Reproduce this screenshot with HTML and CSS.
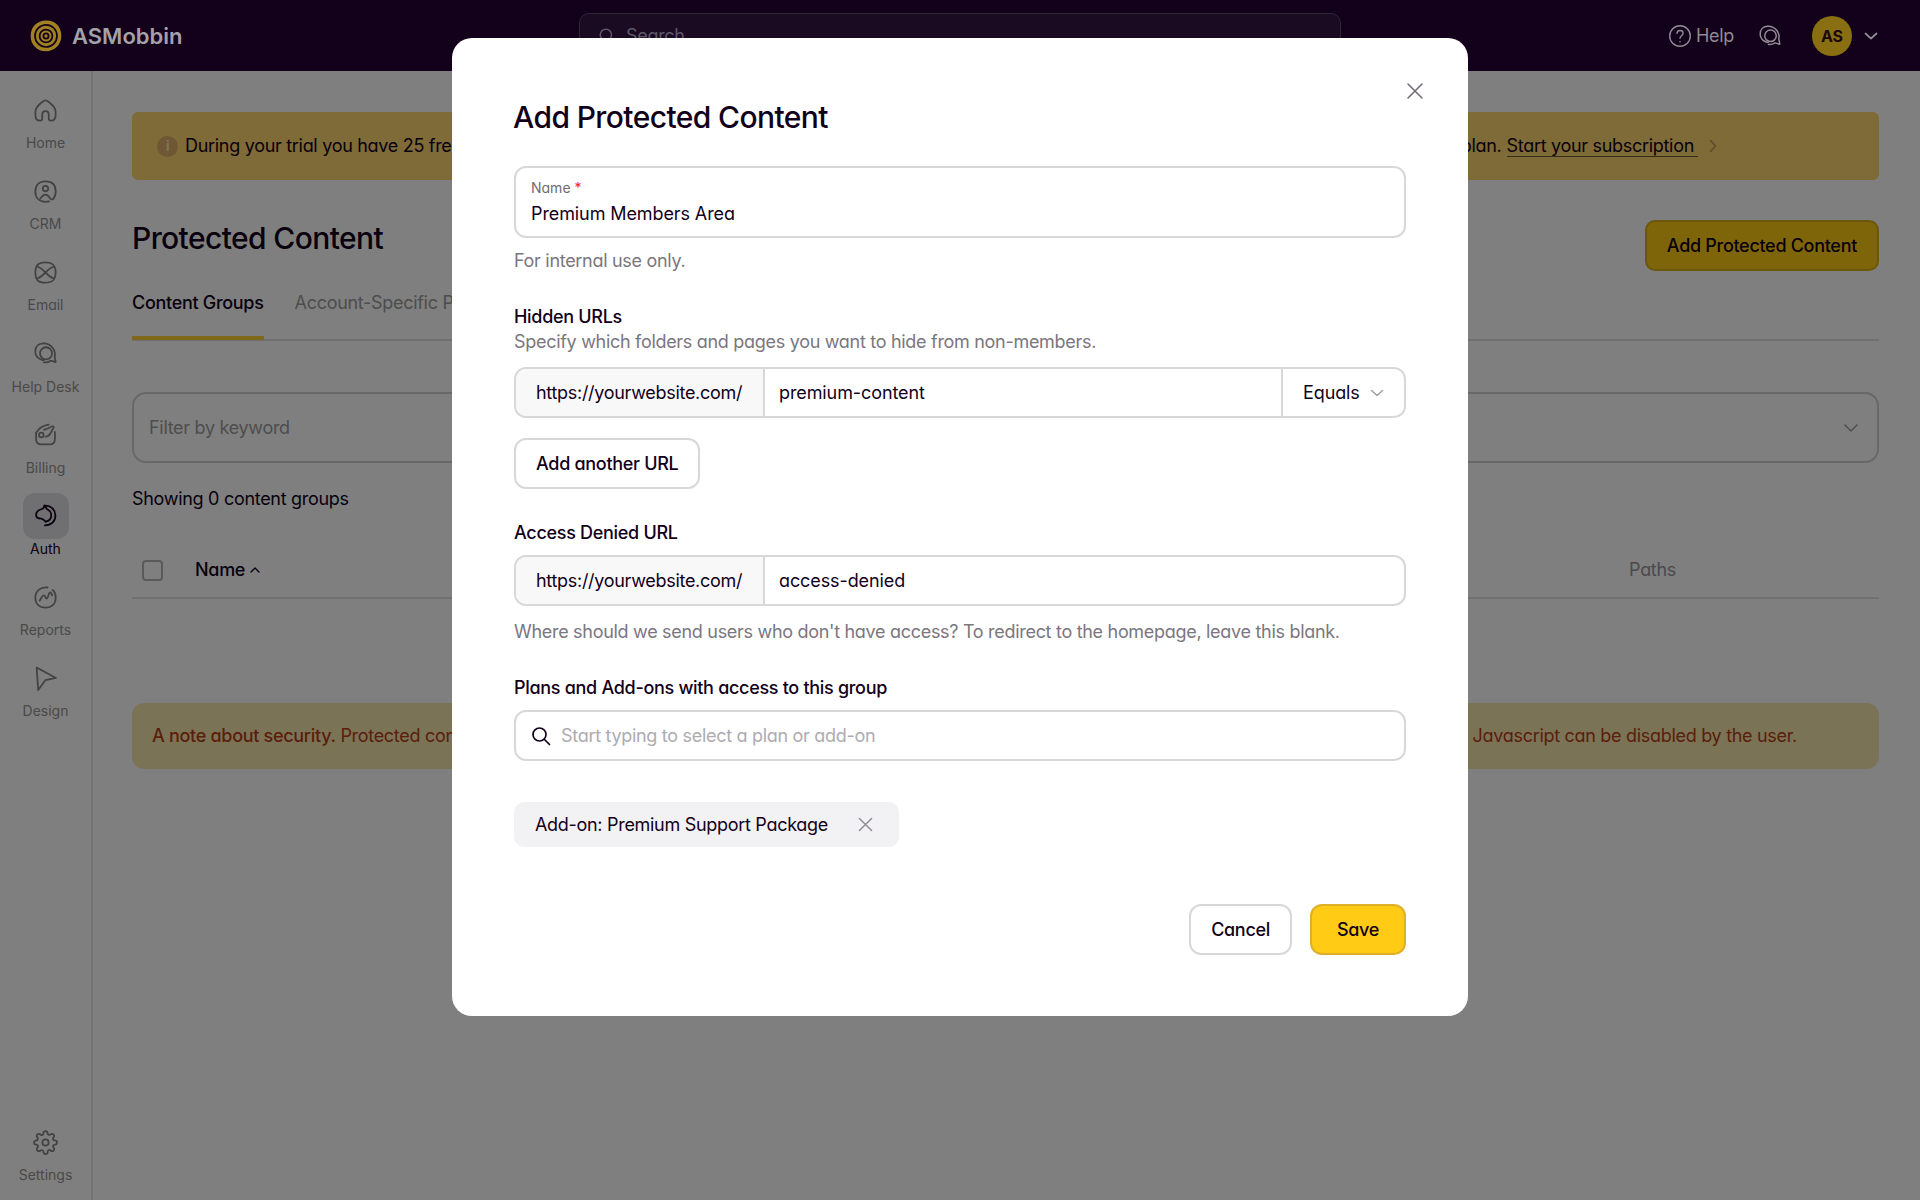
FILE: index.html
```html
<!DOCTYPE html>
<html lang="en">
<head>
    <meta charset="UTF-8">
    <meta name="viewport" content="width=device-width, initial-scale=1.0">
    <title>Protected Content</title>
    <link rel="stylesheet" href="styles.css">
</head>
<body>
<header class="topbar">
    <div class="brand">
        <svg class="brand-logo" viewBox="0 0 32 32" fill="none">
            <path fill="#a28122" d="M16 .5c4.600-.2 8 1.200 11 4 2.800 2.800 4.300 6.500 4.300 11.300 0 4.400-1.400 8-4.400 11-3 2.900-6.700 4.500-11 4.500-4.500 0-8.100-1.500-11-4.500C2 24 .7 20.300.7 16c0-4.600 1.400-8.200 4.300-11.200C8 1.900 11.500.7 16 .5z"/>
            <path stroke="#13001a" stroke-width="1.700" d="M16 4.800c3.200 0 5.700 1.100 7.800 3.200 2.100 2.100 3.200 4.800 3.200 8 0 3.100-1.100 5.700-3.300 7.800-2.100 2.100-4.600 3.200-7.700 3.200-3 0-5.700-1.100-7.800-3.300C6 21.600 5 19.100 5 16c0-3.100 1.100-5.700 3.200-7.800C10.300 6 12.900 4.800 16 4.800z"/>
            <circle stroke="#13001a" stroke-width="1.800" cx="16" cy="16" r="6.400"/>
            <circle stroke="#13001a" stroke-width="1.800" cx="16" cy="16" r="2.600"/>
        </svg>
        <span class="brand-name">ASMobbin</span>
    </div>
    <div class="topsearch">
        <svg class="icon-18" viewBox="0 0 24 24" fill="none" stroke="#5f5866" stroke-width="2" stroke-linecap="round"><circle cx="10.500" cy="10.500" r="7.500"/><path d="M16 16l6 6"/></svg>
        <span>Search</span>
    </div>
    <div class="topright">
        <a class="help-link">
            <svg class="icon-24" viewBox="0 0 24 24" fill="none" stroke="#8f8a94" stroke-width="1.400" stroke-linecap="round"><circle cx="12" cy="12" r="10.300"/><path d="M9 9.300c.2-1.700 1.400-2.800 3.100-2.800 1.700 0 3 1.100 3 2.700 0 2.500-3.100 2.600-3.100 5.100"/><path d="M12 17.500v.2"/></svg>
            <span>Help</span>
        </a>
        <svg class="icon-24 top-chat" viewBox="0 0 24 24" fill="none" stroke="#8f8a94" stroke-width="1.500" stroke-linecap="round" stroke-linejoin="round"><path d="M10 2.200c4.500 0 7 1.800 9 4.500 1.800 2.500 2.500 5.500 1.800 8.500l1 5-4.800-1.300c-2 1.300-4 2-6.500 1.600"/><path d="M10 2.200C5 2.200 2.200 5.500 2.200 10c0 3 1.500 5.500 4 7 1 .6 2 1.200 4 1.500"/><circle cx="12.500" cy="11.800" r="5.800"/></svg>
        <div class="avatar">AS</div>
        <svg class="top-caret" viewBox="0 0 14 8" fill="none" stroke="#8f8a94" stroke-width="1.800" stroke-linecap="round" stroke-linejoin="round"><path d="M1.500 1.500L7 6.500l5.500-5"/></svg>
    </div>
</header>

<div class="layout">
    <nav class="sidebar">
        <a class="nav-item">
            <span class="nav-icon"><svg viewBox="0 0 24 24"><path d="M12 2.200c-1.200 0-2.200.9-3.300 1.800C5.800 6.500 2.300 8.600 2.300 13.200v3.300c0 3.100 1.800 5.300 4.600 5.300 1.500 0 2-.9 2-2.300v-3.700c0-1.900 1.300-3.100 3.100-3.100s3.100 1.200 3.100 3.100v3.700c0 1.400.5 2.300 2 2.300 2.800 0 4.600-2.200 4.600-5.300v-3.300c0-4.600-3.500-6.700-6.400-9.200C14.200 3.100 13.200 2.200 12 2.200z"/></svg></span>
            <span>Home</span>
        </a>
        <a class="nav-item">
            <span class="nav-icon"><svg viewBox="0 0 24 24"><path d="M15.500 21.500c-1.100.3-2.300.4-3.500.4C5.800 21.900 2.200 18 2.200 12S5.800 2.200 12 2.200 21.800 5.800 21.800 12c0 3-.8 5.500-2.500 7.200-1.200 1-2.300.2-3.200-1-1-1.600-2.300-3.200-4.100-3.200-2 0-3.500 1.700-5 3.800"/><circle cx="12" cy="9.200" r="2.600"/></svg></span>
            <span>CRM</span>
        </a>
        <a class="nav-item">
            <span class="nav-icon"><svg viewBox="0 0 24 24"><path d="M12 2.300c7 0 9.700 2.700 9.700 9.700s-2.700 9.700-9.700 9.700S2.300 19 2.300 12 5 2.300 12 2.300z"/><path d="M4.500 6.500c3 1 5 3 7.500 5.500 2.500-2.500 4.500-4.500 7.500-5.500"/><path d="M4.500 17.500c3-1 5-3 7.500-5.500 2.500 2.500 4.500 4.500 7.500 5.500"/></svg></span>
            <span>Email</span>
        </a>
        <a class="nav-item">
            <span class="nav-icon"><svg viewBox="0 0 24 24"><path d="M10 2.200c4.500 0 7 1.800 9 4.500 1.800 2.500 2.500 5.500 1.800 8.500l1 5-4.800-1.300c-2 1.300-4 2-6.500 1.600"/><path d="M10 2.200C5 2.200 2.200 5.500 2.200 10c0 3 1.500 5.500 4 7 1 .6 2 1.200 4 1.500"/><circle cx="12.500" cy="11.800" r="5.800"/></svg></span>
            <span>Help Desk</span>
        </a>
        <a class="nav-item">
            <span class="nav-icon"><svg viewBox="0 0 24 24"><path d="M3 10.500v6c0 3.300 2 5 5 5h8c3 0 5-1.700 5-5V9.500"/><path d="M3 10.500C5 6.500 9 3.500 15 2.500"/><circle cx="8" cy="12.500" r="2.200"/><path d="M12 14c2.500 0 3.800-1.200 4.800-3.200l3-5.300c.4-1-.8-2-1.800-1.300-2 1.500-4.500 2.500-7.500 3.300"/></svg></span>
            <span>Billing</span>
        </a>
        <a class="nav-item nav-active">
            <span class="nav-icon"><svg viewBox="0 0 24 24"><path d="M11 2.500c6-.5 10.500 3.800 10.500 9.500s-4 9.500-10 9.500"/><path d="M11 2.500c0 2-1 3-3 3.500-3 .8-5 3-5 5.500 0 3 3 3.500 5 3.500 2 .5 3 1.500 4 2.800"/><path d="M11 2.500l2.500 3.500c2.500 1 4 3.300 4 6 0 3-2 5.300-5.500 5.800"/></svg></span>
            <span>Auth</span>
        </a>
        <a class="nav-item">
            <span class="nav-icon"><svg viewBox="0 0 24 24"><path d="M14 2.400C7 1.500 2.200 6 2.200 12S6 21.800 12 21.800 21.800 18 21.800 12c0-3-1-5.500-3-7.200"/><path d="M6.500 15c1.500-3 3-5 4-5 1.500 0 1.500 3 2.500 3 1.500 0 2-6 3.500-6 1 0 1.500 1.500 2 3"/></svg></span>
            <span>Reports</span>
        </a>
        <a class="nav-item">
            <span class="nav-icon"><svg viewBox="0 0 24 24"><path d="M3.500 1.500L22 11.500l-10 2L5 23z"/></svg></span>
            <span>Design</span>
        </a>
        <a class="nav-item nav-bottom">
            <span class="nav-icon"><svg viewBox="0 0 24 24"><circle cx="12" cy="12" r="3"/><path d="M19.400 15a1.650 1.650 0 0 0 .33 1.820l.06.06a2 2 0 0 1 0 2.830 2 2 0 0 1-2.830 0l-.06-.06a1.650 1.650 0 0 0-1.820-.33 1.650 1.650 0 0 0-1 1.510V21a2 2 0 0 1-2 2 2 2 0 0 1-2-2v-.09A1.650 1.650 0 0 0 9 19.400a1.650 1.650 0 0 0-1.820.33l-.06.06a2 2 0 0 1-2.830 0 2 2 0 0 1 0-2.830l.06-.06a1.650 1.650 0 0 0 .33-1.820 1.650 1.650 0 0 0-1.510-1H3a2 2 0 0 1-2-2 2 2 0 0 1 2-2h.09A1.650 1.650 0 0 0 4.600 9a1.650 1.650 0 0 0-.33-1.820l-.06-.06a2 2 0 0 1 0-2.830 2 2 0 0 1 2.830 0l.06.06a1.650 1.650 0 0 0 1.820.33H9a1.650 1.650 0 0 0 1-1.510V3a2 2 0 0 1 2-2 2 2 0 0 1 2 2v.09a1.650 1.650 0 0 0 1 1.510 1.650 1.650 0 0 0 1.820-.33l.06-.06a2 2 0 0 1 2.830 0 2 2 0 0 1 0 2.830l-.06.06a1.650 1.650 0 0 0-.33 1.820V9a1.650 1.650 0 0 0 1.510 1H21a2 2 0 0 1 2 2 2 2 0 0 1-2 2h-.09a1.650 1.650 0 0 0-1.510 1z"/></svg></span>
            <span>Settings</span>
        </a>
    </nav>

    <main class="content">
        <div class="trial-banner">
            <span class="info-dot">i</span>
            <span>During your trial you have 25 free contacts</span>
            <span class="trial-right">
                <span>to use on any plan.</span>
                <a class="trial-link">Start your subscription</a>
                <svg class="trial-chevron" viewBox="0 0 8 14" fill="none" stroke="#b8985a" stroke-width="1.600" stroke-linecap="round" stroke-linejoin="round"><path d="M1.500 1.500L6.500 7l-5 5.500"/></svg>
            </span>
        </div>

        <div class="page-head">
            <h1>Protected Content</h1>
            <button class="btn-add">Add Protected Content</button>
        </div>

        <div class="tabs">
            <a class="tab tab-active">Content Groups</a>
            <a class="tab">Account-Specific Pages</a>
        </div>

        <div class="filter">
            <span>Filter by keyword</span>
            <svg class="filter-caret" viewBox="0 0 14 8" fill="none" stroke="#a0a0a0" stroke-width="1.600" stroke-linecap="round" stroke-linejoin="round"><path d="M1 1l6 6 6-6"/></svg>
        </div>

        <p class="count">Showing 0 content groups</p>

        <div class="table-head">
            <span class="check"></span>
            <span class="th-name">Name</span>
            <svg class="th-sort" viewBox="0 0 10 6" fill="none" stroke="#12001a" stroke-width="1.400" stroke-linecap="round" stroke-linejoin="round"><path d="M1 5l4-4 4 4"/></svg>
            <span class="th-paths">Paths</span>
        </div>

        <div class="note">
            <span><b>A note about security.</b> Protected content</span>
            <span class="note-right">Javascript can be disabled by the user.</span>
        </div>
    </main>
</div>

<div class="backdrop"></div>

<div class="modal-wrap">
    <form class="modal">
        <button type="button" class="modal-close">
            <svg viewBox="0 0 16 16" fill="none" stroke="#6f6a74" stroke-width="1.500" stroke-linecap="round"><path d="M1 1l14 14M15 1L1 15"/></svg>
        </button>
        <h2>Add Protected Content</h2>

        <div class="name-field">
            <div class="name-label">Name <span class="req">*</span></div>
            <div class="name-value">Premium Members Area</div>
        </div>
        <p class="hint hint-name">For internal use only.</p>

        <div class="label label-first">Hidden URLs</div>
        <p class="hint hint-under">Specify which folders and pages you want to hide from non-members.</p>
        <div class="url-row">
            <span class="url-prefix">https://yourwebsite.com/</span>
            <span class="url-path">premium-content</span>
            <span class="url-match">
                Equals
                <svg viewBox="0 0 14 8" fill="none" stroke="#a5a1a9" stroke-width="1.600" stroke-linecap="round" stroke-linejoin="round"><path d="M1.500 1.500L7 6.500l5.500-5"/></svg>
            </span>
        </div>
        <button type="button" class="btn btn-another">Add another URL</button>

        <div class="label label-access">Access Denied URL</div>
        <div class="url-row">
            <span class="url-prefix">https://yourwebsite.com/</span>
            <span class="url-path">access-denied</span>
        </div>
        <p class="hint hint-access">Where should we send users who don't have access? To redirect to the homepage, leave this blank.</p>

        <div class="label label-plans">Plans and Add-ons with access to this group</div>
        <div class="plan-search">
            <svg viewBox="0 0 20 20" fill="none" stroke="#12001a" stroke-width="1.700" stroke-linecap="round"><circle cx="8.500" cy="8.500" r="6.500"/><path d="M13.500 13.500l5 5"/></svg>
            <span>Start typing to select a plan or add-on</span>
        </div>

        <div class="chip">
            <span>Add-on: Premium Support Package</span>
            <svg viewBox="0 0 16 16" fill="none" stroke="#8e8a92" stroke-width="1.500" stroke-linecap="round"><path d="M1.500 1.500l13 13M14.500 1.500l-13 13"/></svg>
        </div>

        <div class="modal-actions">
            <button type="button" class="btn">Cancel</button>
            <button type="button" class="btn btn-save">Save</button>
        </div>
    </form>
</div>
</body>
</html>
```

FILE: styles.css
```css
* {
    box-sizing: border-box;
}

html, body {
    height: 100%;
}

body {
    margin: 0;
    overflow: hidden;
    font-family: Inter, "Noto Sans", Arial, sans-serif;
    font-feature-settings: "cv11";
    font-size: 18px;
    line-height: 24px;
    letter-spacing: -0.3px;
    color: #12001a;
    background-color: #fff;
}

button {
    font: inherit;
    font-feature-settings: inherit;
    letter-spacing: inherit;
}

p, h1, h2 {
    margin: 0;
}

/* top bar sits over the backdrop, colours are already dimmed */
.topbar {
    position: relative;
    z-index: 20;
    display: flex;
    align-items: center;
    height: 71px;
    padding: 0 42px 0 30px;
    background-color: #13001a;
}

.brand {
    display: flex;
    align-items: center;
    gap: 10px;
    width: 549px;
}

.brand-logo {
    width: 32px;
    height: 32px;
}

.brand-name {
    font-size: 22px;
    font-weight: 600;
    letter-spacing: 0;
    color: #a5a1a8;
}

.topsearch {
    display: flex;
    align-items: center;
    gap: 10px;
    width: 762px;
    height: 46px;
    padding: 0 18px;
    color: #5f5866;
    background-color: #1a0a22;
    border: 1px solid #2f2636;
    border-radius: 10px;
}

.icon-18 {
    width: 18px;
    height: 18px;
}

.icon-24 {
    width: 24px;
    height: 24px;
}

.topright {
    display: flex;
    align-items: center;
    margin-left: auto;
}

.help-link {
    display: flex;
    align-items: center;
    gap: 4px;
    color: #8f8a94;
}

.top-chat {
    margin-left: 24px;
}

.avatar {
    display: flex;
    align-items: center;
    justify-content: center;
    width: 40px;
    height: 40px;
    margin-left: 30px;
    font-size: 16px;
    font-weight: 700;
    letter-spacing: 0;
    color: #1a0a10;
    background-color: #8a6f12;
    border-radius: 50%;
}

.top-caret {
    width: 14px;
    height: 8px;
    margin-left: 12px;
}

.layout {
    display: flex;
    height: calc(100% - 71px);
}

.sidebar {
    display: flex;
    flex-direction: column;
    flex: 0 0 93px;
    padding-top: 16px;
    background-color: #fff;
    border-right: 2px solid #e6e6e6;
}

.nav-item {
    display: flex;
    flex-direction: column;
    align-items: center;
    height: 81.200px;
    font-size: 14px;
    line-height: 20px;
    letter-spacing: 0;
    color: #939393;
}

.nav-icon {
    display: flex;
    align-items: center;
    justify-content: center;
    width: 46px;
    height: 46px;
    border-radius: 12px;
}

.nav-icon svg {
    width: 25px;
    height: 25px;
    fill: none;
    stroke: #848484;
    stroke-width: 1.700;
    stroke-linecap: round;
    stroke-linejoin: round;
}

.nav-active {
    color: #12001a;
}

.nav-active .nav-icon {
    background-color: #e0dee2;
}

.nav-active .nav-icon svg {
    stroke: #12001a;
}

.nav-bottom {
    margin-top: auto;
    height: 81px;
}

.content {
    flex: 1;
    min-width: 0;
    padding: 41px 41px 0 39px;
}

.trial-banner {
    display: flex;
    align-items: center;
    height: 68px;
    padding: 0 25px;
    background-color: #ffd66e;
    border-radius: 6px;
}

.info-dot {
    display: flex;
    align-items: center;
    justify-content: center;
    width: 21px;
    height: 21px;
    margin-right: 7px;
    font-size: 13px;
    font-weight: 700;
    color: #ffe8b0;
    background-color: #dcae68;
    border-radius: 50%;
}

.trial-right {
    display: flex;
    align-items: center;
    gap: 5px;
    margin-left: auto;
    margin-right: 137px;
}

.trial-link {
    padding-right: 4px;
    line-height: 21px;
    border-bottom: 1px solid #6b5a30;
}

.trial-chevron {
    width: 8px;
    height: 14px;
    margin-left: 6px;
}

.page-head {
    display: flex;
    align-items: center;
    justify-content: space-between;
    margin-top: 40px;
}

h1 {
    margin-top: -15px;
    font-size: 30px;
    line-height: 36px;
    font-weight: 500;
    letter-spacing: -0.6px;
}

.btn-add {
    height: 51px;
    padding: 0 20px;
    font-weight: 500;
    color: #12001a;
    background-color: #ffcb14;
    border: 2px solid #d9ad18;
    border-radius: 10px;
}

.tabs {
    display: flex;
    gap: 31px;
    height: 70px;
    padding-top: 20px;
    border-bottom: 2px solid #e0e0e0;
}

.tab {
    height: 49px;
    color: #9a9a9a;
}

.tab-active {
    font-weight: 500;
    color: #12001a;
    border-bottom: 4px solid #ffd02e;
}

.filter {
    display: flex;
    align-items: center;
    justify-content: space-between;
    height: 71px;
    margin-top: 51px;
    padding: 0 19px 0 15px;
    color: #9c9c9c;
    border: 2px solid #d0d0d0;
    border-radius: 14px;
}

.filter-caret {
    width: 14px;
    height: 8px;
}

.count {
    margin-top: 24px;
}

.table-head {
    display: flex;
    align-items: center;
    height: 60px;
    margin-top: 28px;
    padding: 4px 0 0 10px;
    border-bottom: 2px solid #e3e3e3;
}

.check {
    width: 21px;
    height: 21px;
    border: 2px solid #b5b5b5;
    border-radius: 4px;
}

.th-name {
    margin-left: 32px;
    font-weight: 500;
}

.th-sort {
    width: 10px;
    height: 6px;
    margin-left: 5px;
}

.th-paths {
    margin-left: auto;
    margin-right: 203px;
    color: #949494;
}

.note {
    display: flex;
    align-items: center;
    justify-content: space-between;
    height: 66px;
    margin-top: 104px;
    padding: 0 82px 0 20px;
    color: #b53d15;
    background-color: #f7e6ad;
    border-radius: 12px;
}

.note b {
    font-weight: 500;
}

.backdrop {
    position: fixed;
    inset: 0;
    z-index: 10;
    background-color: rgba(0, 0, 0, 0.5);
}

.modal-wrap {
    position: fixed;
    inset: 0;
    z-index: 30;
    display: flex;
    justify-content: center;
    align-items: flex-start;
    padding-top: 38px;
}

.modal {
    position: relative;
    width: 1016px;
    height: 978px;
    padding: 61px 62px 62px;
    background-color: #fff;
    border-radius: 20px;
}

.modal-close {
    position: absolute;
    top: 45px;
    right: 45px;
    width: 16px;
    height: 16px;
    padding: 0;
    background: none;
    border: none;
}

.modal-close svg {
    display: block;
    width: 16px;
    height: 16px;
}

h2 {
    margin-bottom: 31px;
    margin-left: -1px;
    font-size: 30px;
    line-height: 36px;
    font-weight: 500;
    letter-spacing: -0.6px;
}

.name-field {
    height: 72px;
    padding: 11px 15px 0;
    border: 2px solid #d8d7da;
    border-radius: 12px;
}

.name-label {
    font-size: 14px;
    line-height: 18px;
    letter-spacing: 0;
    color: #6f6a74;
}

.req {
    color: #e5262b;
}

.name-value {
    margin-top: 4px;
    line-height: 26px;
    letter-spacing: -0.1px;
}

.hint {
    color: #7b7680;
}

.hint-name {
    margin-top: 11px;
}

.label {
    font-weight: 500;
}

.label-first {
    margin-top: 32px;
}

.hint-under {
    margin-top: 1px;
    margin-bottom: 13px;
}

.url-row {
    display: flex;
    height: 51px;
    border: 2px solid #d8d7da;
    border-radius: 12px;
    overflow: hidden;
}

.url-prefix {
    display: flex;
    align-items: center;
    width: 249px;
    padding-left: 20px;
    background-color: #f8f8f9;
    border-right: 2px solid #d8d7da;
}

.url-path {
    display: flex;
    align-items: center;
    flex: 1;
    padding-left: 14px;
    letter-spacing: -0.1px;
}

.url-match {
    display: flex;
    align-items: center;
    gap: 10px;
    width: 123px;
    padding-left: 20px;
    letter-spacing: -0.1px;
    border-left: 2px solid #d8d7da;
}

.url-match svg {
    width: 14px;
    height: 8px;
}

.btn {
    height: 51px;
    padding: 0 20px;
    font-weight: 500;
    color: #12001a;
    background-color: #fff;
    border: 2px solid #d8d7da;
    border-radius: 12px;
}

.btn-another {
    display: block;
    margin-top: 20px;
}

.label-access {
    margin-top: 32px;
    margin-bottom: 10px;
}

.hint-access {
    margin-top: 14px;
}

.label-plans {
    margin-top: 32px;
    margin-bottom: 10px;
}

.plan-search {
    display: flex;
    align-items: center;
    gap: 10px;
    height: 51px;
    padding-left: 15px;
    color: #aeabb1;
    border: 2px solid #d8d7da;
    border-radius: 12px;
}

.plan-search svg {
    width: 20px;
    height: 20px;
}

.chip {
    display: flex;
    align-items: center;
    justify-content: space-between;
    width: 385px;
    height: 45px;
    margin-top: 41px;
    padding: 0 26px 0 21px;
    background-color: #f2f1f3;
    border-radius: 10px;
}

.chip svg {
    width: 15px;
    height: 15px;
}

.modal-actions {
    display: flex;
    justify-content: flex-end;
    gap: 18px;
    margin-top: 57px;
}

.btn-save {
    width: 96px;
    background-color: #ffcb14;
    border-color: #deb02a;
}
```
